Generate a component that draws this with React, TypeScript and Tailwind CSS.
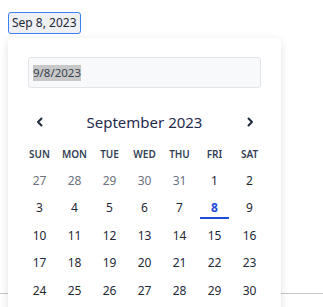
import React from "react";

const weekdays = ["SUN", "MON", "TUE", "WED", "THU", "FRI", "SAT"];

const weeks: { d: number; muted?: boolean }[][] = [
  [{ d: 27, muted: true }, { d: 28, muted: true }, { d: 29, muted: true }, { d: 30, muted: true }, { d: 31, muted: true }, { d: 1 }, { d: 2 }],
  [3, 4, 5, 6, 7, 8, 9].map((d) => ({ d })),
  [10, 11, 12, 13, 14, 15, 16].map((d) => ({ d })),
  [17, 18, 19, 20, 21, 22, 23].map((d) => ({ d })),
  [24, 25, 26, 27, 28, 29, 30].map((d) => ({ d })),
];

function Chevron({ dir }: { dir: "left" | "right" }) {
  return (
    <svg width="10" height="10" viewBox="0 0 10 10" className="text-[#1e293b]">
      <path
        d={dir === "left" ? "M6.5 1.5 3 5l3.5 3.5" : "M3.5 1.5 7 5 3.5 8.5"}
        fill="none"
        stroke="currentColor"
        strokeWidth="2"
        strokeLinecap="round"
        strokeLinejoin="round"
      />
    </svg>
  );
}

export default function App() {
  const selected = 8;

  return (
    <div className="relative h-[307px] w-[323px] overflow-hidden bg-white font-['Noto_Sans',sans-serif] text-[#1f2937]">
      <div className="pt-3 pl-2">
        <button className="block h-[22px] rounded-[3px] border border-[#3b82f6] bg-[#eef0f4] px-[3px] text-[12px] leading-none text-[#1f2937]">
          Sep 8, 2023
        </button>
      </div>

      {/* content under the popover */}
      <div className="mt-[259px] border-t border-[#c4c6cc]" />

      <div className="absolute left-2 top-[38px] w-[273px] rounded-[5px] bg-white px-[14px] pt-[19px] pb-4 shadow-[0_2px_8px_rgba(0,0,0,0.12)]">
        <div className="mx-[6px] flex h-[31px] items-center rounded-[3px] border border-[#e2e4e8] bg-[#f8f9fb] px-1">
          <span className="bg-[#c8c8c8] text-[11.5px] leading-[16px] text-[#374151]">9/8/2023</span>
        </div>

        <div className="mt-5 grid h-7 grid-cols-7 items-center">
          <div className="flex justify-center">
            <Chevron dir="left" />
          </div>
          <div className="col-span-5 text-center text-[15px] text-[#1f2a4d]">September 2023</div>
          <div className="flex justify-center">
            <Chevron dir="right" />
          </div>
        </div>

        <div className="mt-[6px] grid h-6 grid-cols-7 items-center">
          {weekdays.map((w) => (
            <div key={w} className="text-center text-[10px] font-semibold text-[#334155]">
              {w}
            </div>
          ))}
        </div>

        <div className="mt-px">
          {weeks.map((row, i) => (
            <div key={i} className="grid h-[27.5px] grid-cols-7 items-center">
              {row.map((c, j) => {
                const isSel = !c.muted && c.d === selected;
                return (
                  <div key={j} className="relative flex h-full items-center justify-center">
                    <span
                      className={
                        "text-[12px] " +
                        (c.muted ? "text-[#6b7280]" : isSel ? "font-bold text-[#1d4ed8]" : "text-[#1f2937]")
                      }
                    >
                      {c.d}
                    </span>
                    {isSel && <span className="absolute bottom-[3px] left-[3px] right-[3px] h-[2px] bg-[#1d4ed8]" />}
                  </div>
                );
              })}
            </div>
          ))}
        </div>
      </div>
    </div>
  );
}
